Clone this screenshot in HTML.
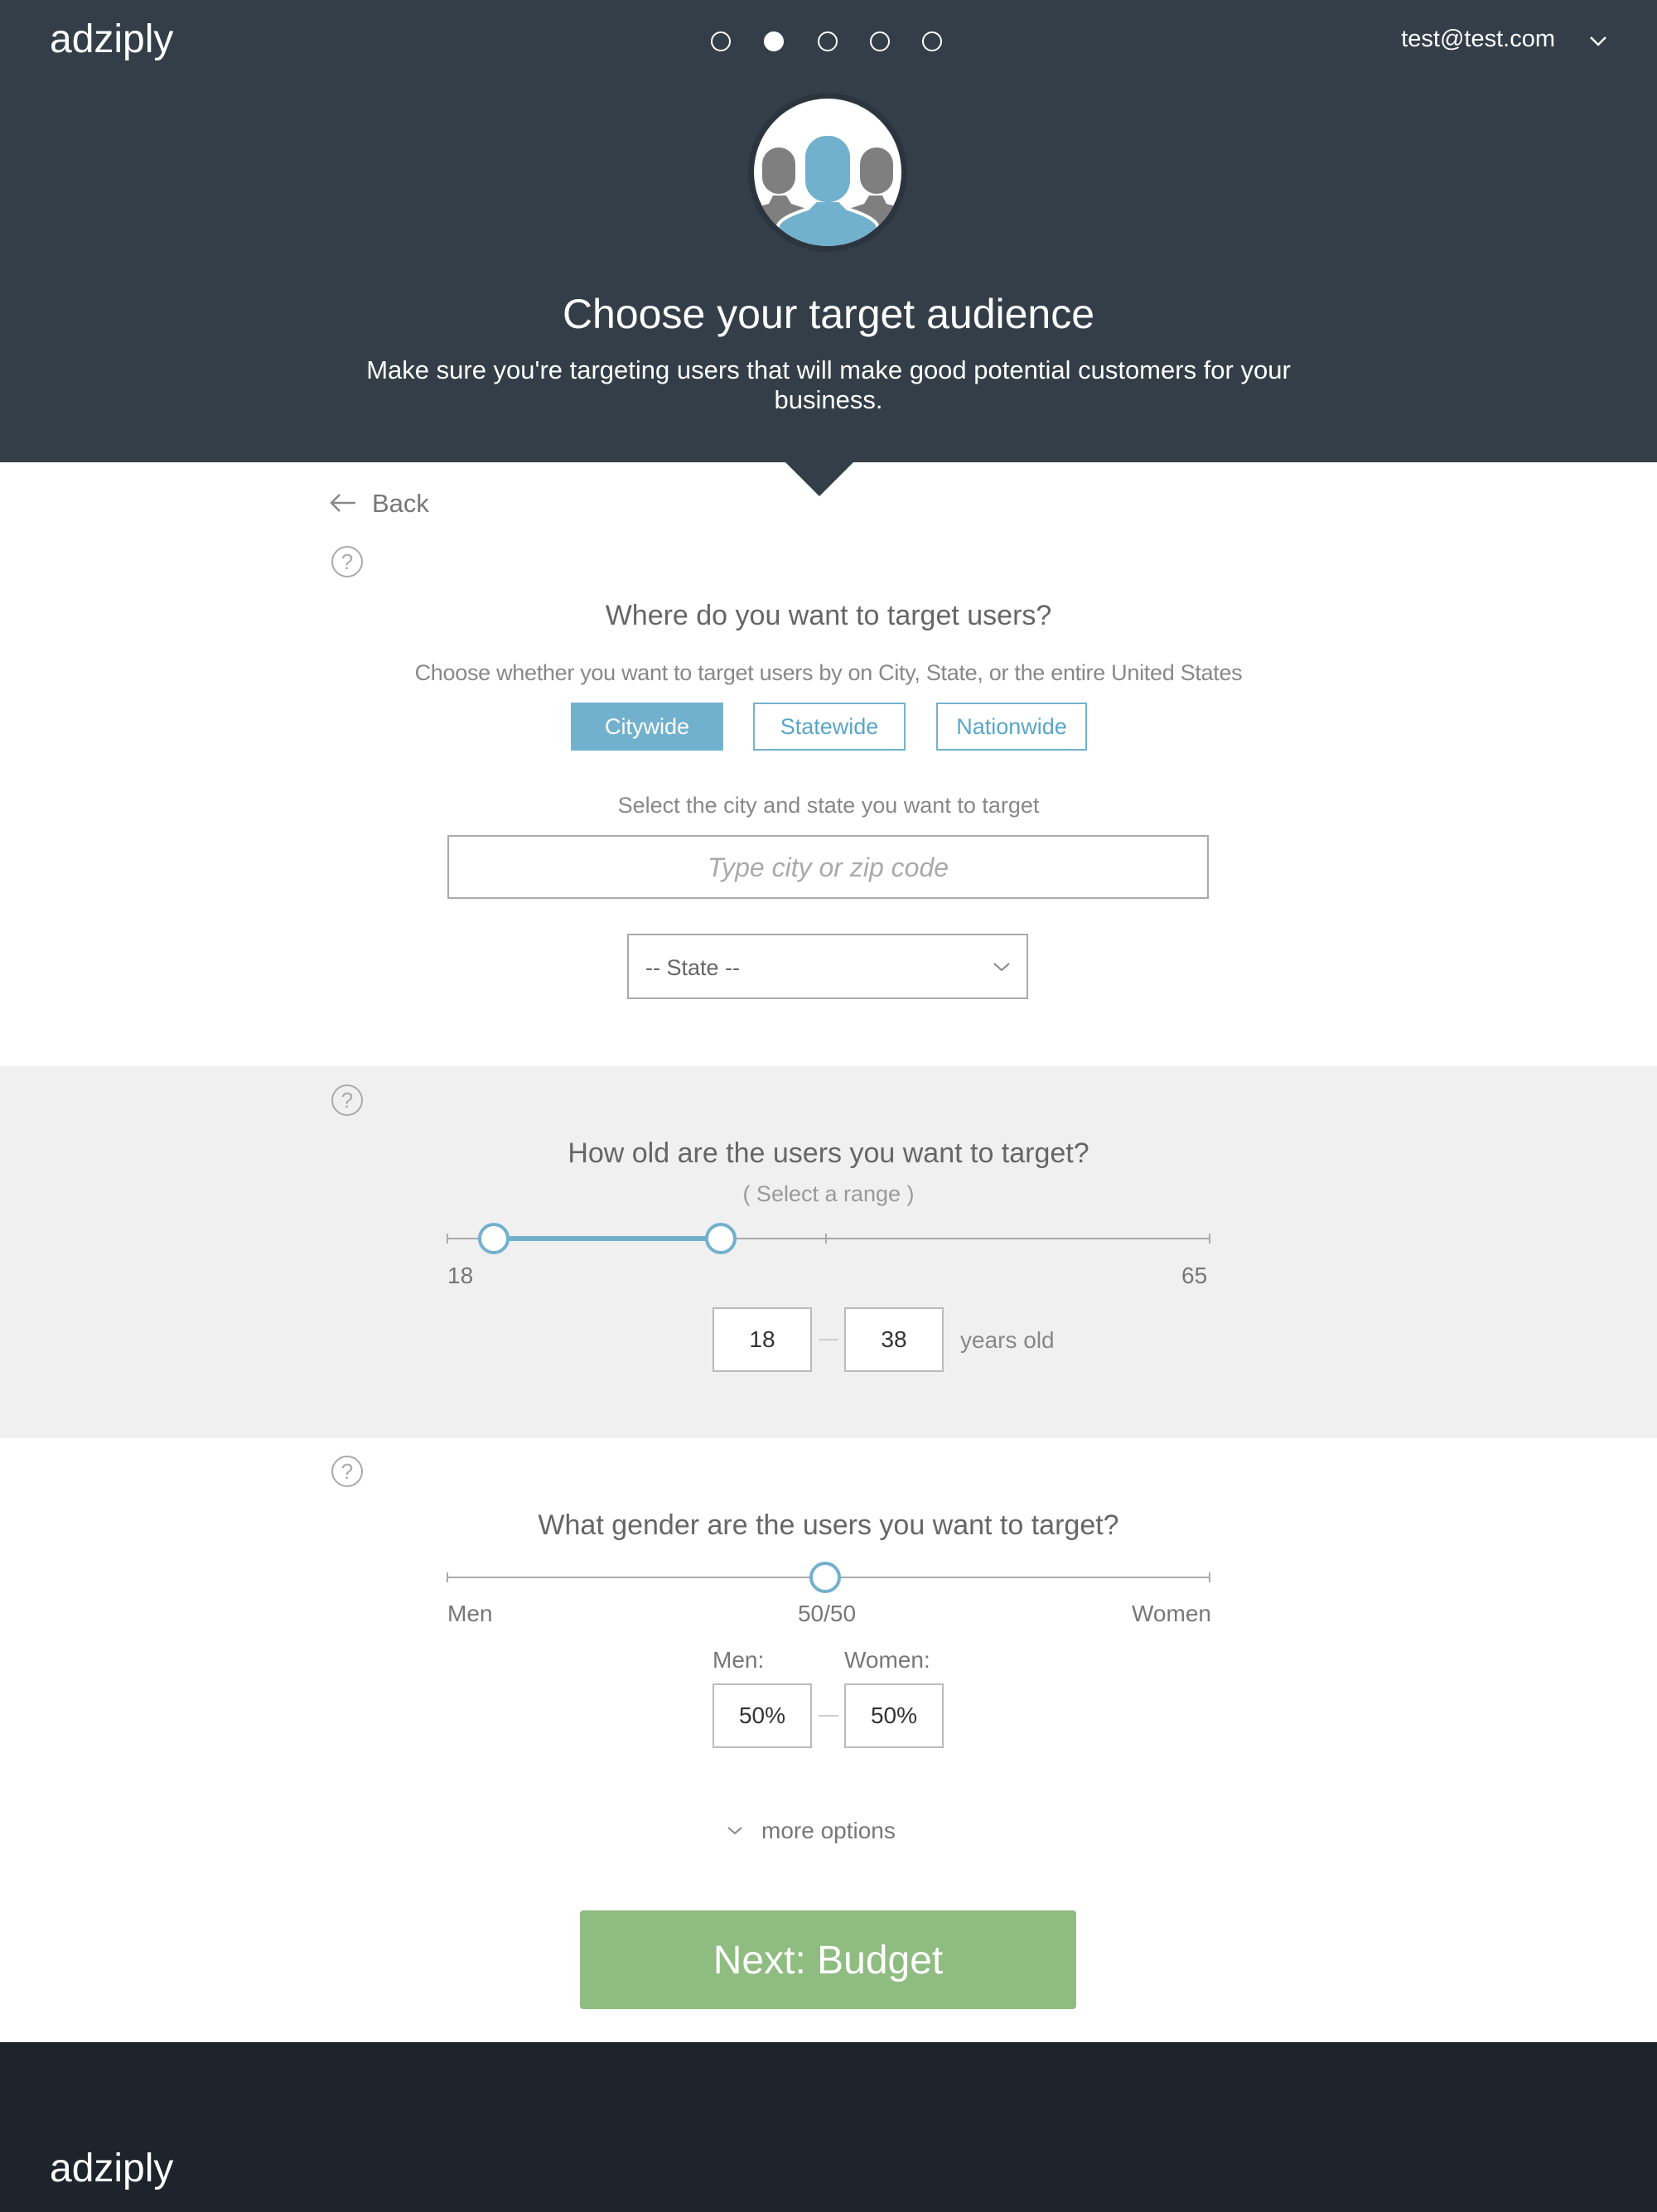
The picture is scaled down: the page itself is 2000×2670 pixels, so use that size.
<!DOCTYPE html>
<html><head><meta charset="utf-8"><style>
*{margin:0;padding:0;box-sizing:border-box}
body{width:2000px;height:2670px;background:#fff;font-family:"Liberation Sans",Arial,sans-serif;position:relative;overflow:hidden;color:#666}
.a{position:absolute}
.c{position:absolute;left:0;width:2000px;text-align:center}
.hdr{left:0;top:0;width:2000px;height:558px;background:#333e48}
.dot{position:absolute;width:24px;height:24px;border:2.5px solid #fff;border-radius:50%;top:38px}
.q{position:absolute;width:38px;height:38px;border:2px solid #aaa;border-radius:50%;color:#aaa;font-size:26px;text-align:center;line-height:34px}
.btn{position:absolute;top:848px;height:58px;font-size:27px;line-height:54px;text-align:center;border:2px solid #74b2ce;color:#5aa6c8}
.box{position:absolute;width:120px;height:78px;border:2px solid #bbb;background:#fff;color:#333;font-size:28px;text-align:center;line-height:74px}
</style></head><body>
<div class="a hdr"></div>
<div class="a" style="left:60px;top:20px;font-size:48px;color:#fff">adziply</div>
<div class="dot" style="left:858px"></div>
<div class="dot" style="left:922px;background:#fff"></div>
<div class="dot" style="left:987px"></div>
<div class="dot" style="left:1050px"></div>
<div class="dot" style="left:1113px"></div>
<div class="a" style="left:1680px;top:31px;font-size:29px;color:#fff;width:197px;text-align:right">test@test.com</div>
<svg class="a" style="left:1918px;top:43px" width="22" height="14"><path d="M2 2 L11 11 L20 2" stroke="#fff" stroke-width="2.5" fill="none"/></svg>
<svg class="a" style="left:903px;top:112px" width="192" height="192" viewBox="0 0 192 192">
<circle cx="96" cy="96" r="96" fill="#2c353e"/>
<clipPath id="cc"><circle cx="96" cy="96" r="89"/></clipPath>
<circle cx="96" cy="96" r="89" fill="#fff"/>
<g clip-path="url(#cc)">
<rect x="17" y="66" width="40" height="56" rx="20" fill="#7f7f7f"/>
<rect x="135" y="66" width="40" height="56" rx="20" fill="#7f7f7f"/>
<path d="M-20 200 V150 Q0 140 25 134 L30 124 H46 L52 134 Q70 140 90 146 V200Z" fill="#7f7f7f"/>
<path d="M212 200 V150 Q192 140 167 134 L162 124 H146 L140 134 Q122 140 102 146 V200Z" fill="#7f7f7f"/>
<g stroke="#fff" stroke-width="4">
<path d="M30 200 L36 160 Q40 150 72 140 L82 130 H110 L120 140 Q152 150 156 160 L162 200Z" fill="#72b1cd"/>
<rect x="67" y="50" width="58" height="80" rx="28" fill="#72b1cd"/>
</g>
<path d="M36 200 L40 162 Q44 152 74 143 L84 132 H108 L118 143 Q148 152 152 162 L156 200Z" fill="#72b1cd"/>
<rect x="69" y="52" width="54" height="80" rx="26" fill="#72b1cd"/>
</g>
</svg>
<div class="c" style="top:350px;font-size:50px;color:#fff">Choose your target audience</div>
<div class="c" style="top:429px;font-size:31px;color:#fff;line-height:36px;padding:0 390px">Make sure you're targeting users that will make good potential customers for your business.</div>
<svg class="a" style="left:947px;top:557px" width="84" height="43"><path d="M0 0 L84 0 L42 42Z" fill="#333e48"/></svg>
<svg class="a" style="left:397px;top:595px" width="34" height="24"><path d="M32 12 H3 M13 2 L3 12 L13 22" stroke="#888" stroke-width="2.5" fill="none"/></svg>
<div class="a" style="left:449px;top:590px;font-size:31px;color:#777">Back</div>
<div class="q" style="left:400px;top:659px">?</div>
<div class="c" style="top:724px;font-size:34px;color:#666">Where do you want to target users?</div>
<div class="c" style="top:797px;font-size:27px;color:#888;letter-spacing:-0.3px">Choose whether you want to target users by on City, State, or the entire United States</div>
<div class="btn" style="left:689px;width:184px;background:#72b1cd;color:#fff">Citywide</div>
<div class="btn" style="left:909px;width:184px">Statewide</div>
<div class="btn" style="left:1130px;width:182px">Nationwide</div>
<div class="c" style="top:957px;font-size:27px;color:#888">Select the city and state you want to target</div>
<div class="a" style="left:540px;top:1008px;width:919px;height:77px;border:2px solid #aaa;text-align:center;line-height:75px;font-size:32px;font-style:italic;color:#aaa">Type city or zip code</div>
<div class="a" style="left:757px;top:1127px;width:484px;height:79px;border:2px solid #aaa;line-height:78px;font-size:27px;color:#666;padding-left:20px">-- State --</div>
<svg class="a" style="left:1198px;top:1161px" width="22" height="13"><path d="M2 2 L11 10 L20 2" stroke="#888" stroke-width="2" fill="none"/></svg>
<div class="a" style="left:0;top:1287px;width:2000px;height:449px;background:#f0f0f0"></div>
<div class="q" style="left:400px;top:1309px">?</div>
<div class="c" style="top:1373px;font-size:34px;color:#666">How old are the users you want to target?</div>
<div class="c" style="top:1426px;font-size:27px;color:#999">( Select a range )</div>
<svg class="a" style="left:530px;top:1471px" width="940" height="50">
<path d="M10 24 H930 M10 18 V30 M467 18 V30 M930 18 V30" stroke="#aaa" stroke-width="2" fill="none"/>
<path d="M66 24 H340" stroke="#72b1cd" stroke-width="6"/>
<circle cx="66" cy="24" r="17" fill="#fff" stroke="#72b1cd" stroke-width="4"/>
<circle cx="340" cy="24" r="17" fill="#fff" stroke="#72b1cd" stroke-width="4"/>
</svg>
<div class="a" style="left:540px;top:1524px;font-size:28px;color:#777">18</div>
<div class="a" style="left:1426px;top:1524px;font-size:28px;color:#777">65</div>
<div class="box" style="left:860px;top:1578px">18</div>
<div class="a" style="left:988px;top:1616px;width:24px;height:2px;background:#ccc"></div>
<div class="box" style="left:1019px;top:1578px">38</div>
<div class="a" style="left:1159px;top:1602px;font-size:28px;color:#888">years old</div>
<div class="q" style="left:400px;top:1757px">?</div>
<div class="c" style="top:1822px;font-size:34px;color:#666">What gender are the users you want to target?</div>
<svg class="a" style="left:530px;top:1880px" width="940" height="50">
<path d="M10 24 H930 M10 18 V30 M930 18 V30" stroke="#aaa" stroke-width="2" fill="none"/>
<circle cx="466" cy="24" r="17" fill="#fff" stroke="#72b1cd" stroke-width="4"/>
</svg>
<div class="a" style="left:540px;top:1932px;font-size:28px;color:#777">Men</div>
<div class="c" style="top:1932px;font-size:28px;color:#777;left:-2px">50/50</div>
<div class="a" style="left:1366px;top:1932px;font-size:28px;color:#777">Women</div>
<div class="a" style="left:860px;top:1988px;font-size:28px;color:#777">Men:</div>
<div class="a" style="left:1019px;top:1988px;font-size:28px;color:#777">Women:</div>
<div class="box" style="left:860px;top:2032px">50%</div>
<div class="a" style="left:988px;top:2070px;width:24px;height:2px;background:#ccc"></div>
<div class="box" style="left:1019px;top:2032px">50%</div>
<svg class="a" style="left:877px;top:2204px" width="20" height="12"><path d="M2 2 L10 9 L18 2" stroke="#888" stroke-width="2" fill="none"/></svg>
<div class="a" style="left:919px;top:2194px;font-size:28px;color:#777">more options</div>
<div class="a" style="left:700px;top:2306px;width:599px;height:119px;background:#8fbc80;border-radius:4px;color:#fff;font-size:48px;text-align:center;line-height:122px">Next: Budget</div>
<div class="a" style="left:0;top:2465px;width:2000px;height:205px;background:#1e242b"></div>
<div class="a" style="left:60px;top:2590px;font-size:48px;color:#fff">adziply</div>
</body></html>
